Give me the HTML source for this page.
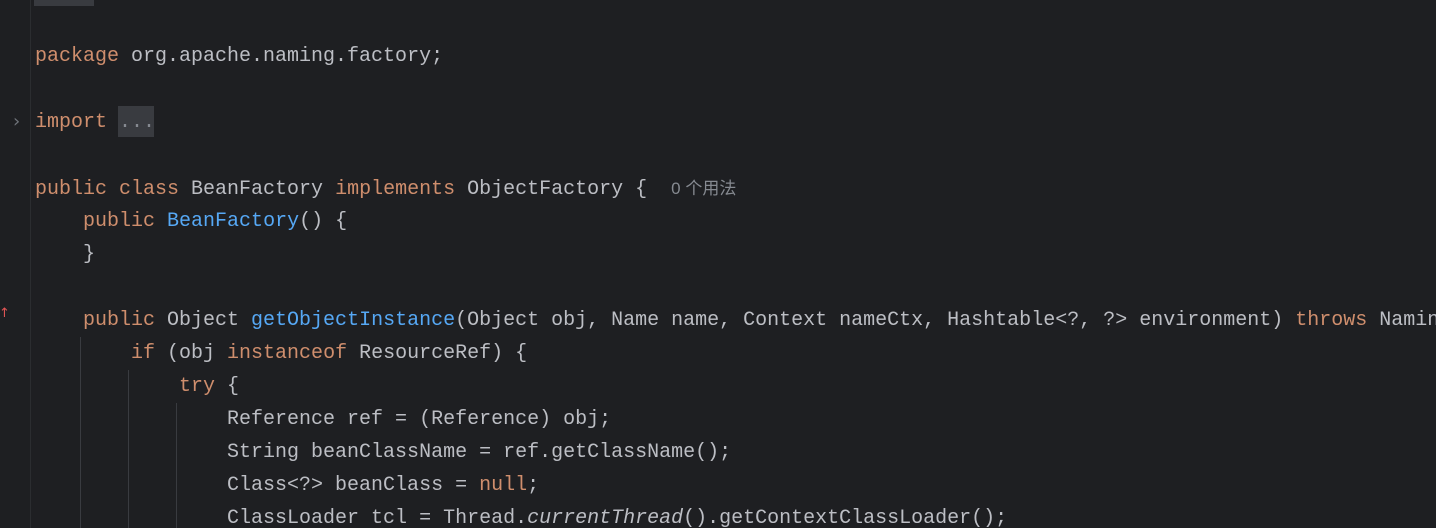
<!DOCTYPE html>
<html style="overflow:hidden;width:1436px;height:528px"><head><meta charset="utf-8"><style>
html,body{overflow:hidden}
body{margin:0;width:1436px;height:528px;background:#1e1f22;position:relative;font-family:"Liberation Mono","DejaVu Sans Mono",monospace;font-size:20px;color:#bcbec4}
.l{position:absolute;left:35px;height:33px;line-height:33px;white-space:pre;top:0}
.k{color:#cf8e6d}.m{color:#56a8f5}.i{font-style:italic}
.h{color:#868a91;font-family:"Liberation Sans","Noto Sans CJK SC",sans-serif;font-size:17px}
.g{position:absolute;width:1px;background:#393b40}
</style></head><body>
<div style="position:absolute;left:34px;top:0;width:60px;height:6px;background:#393b40"></div>
<div class="g" style="left:30px;top:0;height:528px;background:#2b2d30"></div>
<div class="g" style="left:80px;top:337px;height:191px"></div>
<div class="g" style="left:128px;top:370px;height:158px"></div>
<div class="g" style="left:176px;top:403px;height:125px"></div>
<div style="position:absolute;left:13px;top:111px;color:#6f737a;font-size:18px;font-family:'DejaVu Sans',sans-serif">›</div>
<div style="position:absolute;left:-1px;top:306px;color:#e05555;font-size:13px;font-family:'DejaVu Sans',sans-serif">↑</div>
<div style="position:absolute;left:118px;top:106px;width:36px;height:31px;background:#393b40"></div>
<div class="l" style="top:40px"><span class="k">package</span> org.apache.naming.factory;</div>
<div class="l" style="top:106px"><span class="k">import</span> <span style="color:#868a91">...</span></div>
<div class="l" style="top:172px"><span class="k">public class</span> BeanFactory <span class="k">implements</span> ObjectFactory {  <span class="h">0 个用法</span></div>
<div class="l" style="top:205px">    <span class="k">public</span> <span class="m">BeanFactory</span>() {</div>
<div class="l" style="top:238px">    }</div>
<div class="l" style="top:304px">    <span class="k">public</span> Object <span class="m">getObjectInstance</span>(Object obj, Name name, Context nameCtx, Hashtable&lt;?, ?&gt; environment) <span class="k">throws</span> Namin</div>
<div class="l" style="top:337px">        <span class="k">if</span> (obj <span class="k">instanceof</span> ResourceRef) {</div>
<div class="l" style="top:370px">            <span class="k">try</span> {</div>
<div class="l" style="top:403px">                Reference ref = (Reference) obj;</div>
<div class="l" style="top:436px">                String beanClassName = ref.getClassName();</div>
<div class="l" style="top:469px">                Class&lt;?&gt; beanClass = <span class="k">null</span>;</div>
<div class="l" style="top:502px;height:26px;overflow:hidden">                ClassLoader tcl = Thread.<span class="i">currentThread</span>().getContextClassLoader();</div>
</body></html>
